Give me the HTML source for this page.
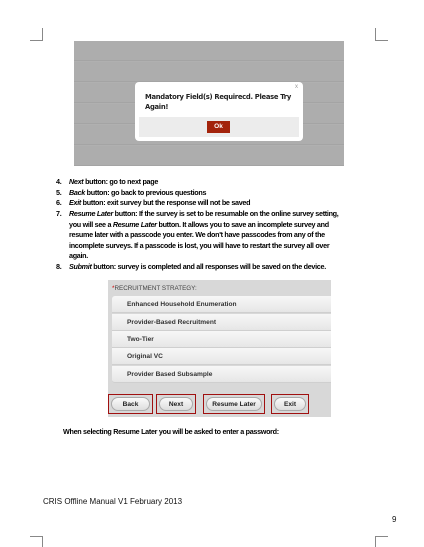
<!DOCTYPE html>
<html><head><meta charset="utf-8"><style>
body{margin:0;width:424px;height:547px;background:#fff;position:relative;overflow:hidden;font-family:"Liberation Sans",sans-serif;}
.a{position:absolute}
.cm{position:absolute;background:#888}
.gray{left:74px;top:41px;width:270px;height:125px;background:repeating-linear-gradient(#adadad 0 19px,#a4a4a4 19px 20px,#b0b0b0 20px 21px);}
.dlg{left:135px;top:82px;width:168px;height:59px;background:#fff;border-radius:4px}
.txt{font-size:7.2px;color:#000;line-height:10.6px;font-weight:bold;letter-spacing:-0.3px;white-space:nowrap}
.txt i{font-style:italic}
.li{position:absolute;left:56px;width:300px}
.li span.n{position:absolute;left:0}
.li div{margin-left:13px}
.sv{left:108px;top:280px;width:223px;height:137px;background:#d8d8d8}
.opt{position:absolute;left:4px;width:219px;height:17px;background:linear-gradient(#f7f7f7,#e6e6e6);border-bottom:1px solid #cfcfcf;font-size:6.6px;font-weight:bold;color:#333;line-height:17px;padding-left:15px;box-sizing:border-box}
.btn{position:absolute;top:394px;height:20px;border:1px solid #a01010;box-sizing:border-box}
.pill{position:absolute;top:2px;bottom:2px;left:2px;right:2px;border-radius:8px;background:linear-gradient(#fafafa,#ddd);border:1px solid #aaa;font-size:6.6px;font-weight:bold;text-align:center;line-height:14px;color:#222}
</style></head><body>
<div class="cm" style="left:42px;top:28px;width:1px;height:13px"></div>
<div class="cm" style="left:30px;top:40px;width:13px;height:1px"></div>
<div class="cm" style="left:375px;top:28px;width:1px;height:13px"></div>
<div class="cm" style="left:375px;top:40px;width:13px;height:1px"></div>
<div class="cm" style="left:30px;top:536px;width:13px;height:1px"></div>
<div class="cm" style="left:42px;top:536px;width:1px;height:11px"></div>
<div class="cm" style="left:375px;top:536px;width:13px;height:1px"></div>
<div class="cm" style="left:375px;top:536px;width:1px;height:11px"></div>

<div class="a gray"></div>
<div class="a dlg">
 <div class="a" style="right:5px;top:2px;font-size:6px;color:#999">x</div>
 <div class="a" style="left:10px;top:10px;width:150px;font-size:6.8px;font-weight:bold;color:#222;line-height:10px;font-family:'DejaVu Sans',sans-serif;letter-spacing:-0.3px">Mandatory Field(s) Requirecd. Please Try Again!</div>
 <div class="a" style="left:4px;top:35px;width:160px;height:20px;background:#ececec"></div>
 <div class="a" style="left:72px;top:39px;width:23px;height:12px;background:#a3230b;color:#fff;font-size:6.5px;font-weight:bold;text-align:center;line-height:12px">Ok</div>
</div>

<div class="txt">
<div class="li" style="top:177px"><span class="n">4.</span><div><i>Next</i> button: go to next page</div></div>
<div class="li" style="top:188px"><span class="n">5.</span><div><i>Back</i> button: go back to previous questions</div></div>
<div class="li" style="top:198px"><span class="n">6.</span><div><i>Exit</i> button: exit survey but the response will not be saved</div></div>
<div class="li" style="top:209px"><span class="n">7.</span><div><i>Resume Later</i> button: If the survey is set to be resumable on the online survey setting,<br>you will see a <i>Resume Later</i> button. It allows you to save an incomplete survey and<br>resume later with a passcode you enter. We don't have passcodes from any of the<br>incomplete surveys. If a passcode is lost, you will have to restart the survey all over<br>again.</div></div>
<div class="li" style="top:262px"><span class="n">8.</span><div><i>Submit</i> button: survey is completed and all responses will be saved on the device.</div></div>
</div>

<div class="a sv">
 <div class="a" style="left:4px;top:5px;font-size:6.3px;color:#444"><span style="color:#c00">*</span>RECRUITMENT STRATEGY:</div>
 <div class="opt" style="top:16px;border-radius:3px 0 0 0">Enhanced Household Enumeration</div>
 <div class="opt" style="top:34px">Provider-Based Recruitment</div>
 <div class="opt" style="top:51px">Two-Tier</div>
 <div class="opt" style="top:68px">Original VC</div>
 <div class="opt" style="top:86px;border-radius:0 0 0 3px">Provider Based Subsample</div>
</div>
<div class="btn" style="left:108px;width:45px"><div class="pill">Back</div></div>
<div class="btn" style="left:156px;width:40px"><div class="pill">Next</div></div>
<div class="btn" style="left:203px;width:62px"><div class="pill">Resume Later</div></div>
<div class="btn" style="left:271px;width:38px"><div class="pill">Exit</div></div>

<div class="a txt" style="left:63px;top:427px">When selecting Resume Later you will be asked to enter a password:</div>
<div class="a" style="left:43px;top:497px;font-size:8px;color:#111">CRIS Offline Manual V1 February 2013</div>
<div class="a" style="left:392px;top:515px;font-size:8px;color:#111">9</div>
</body></html>
